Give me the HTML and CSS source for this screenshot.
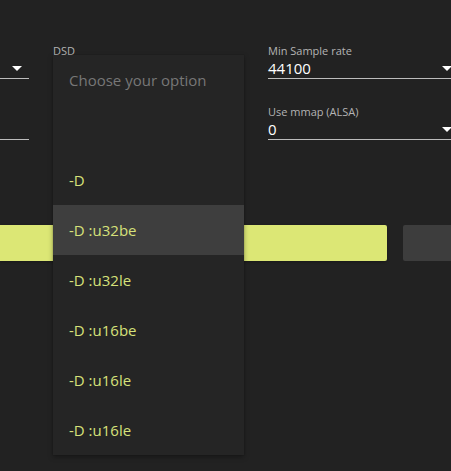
FILE: index.html
```html
<!DOCTYPE html>
<html lang="en">
<head>
<meta charset="utf-8">
<title>Settings</title>
<link rel="stylesheet" href="styles.css">
</head>
<body>
<div class="page">
  <div class="fields">
    <div class="field">
      <div class="label"></div>
      <div class="select"><span class="value"></span><span class="caret"></span></div>
    </div>
    <div class="field">
      <div class="label">DSD</div>
      <div class="select"><span class="value"></span><span class="caret"></span></div>
    </div>
    <div class="field">
      <div class="label">Min Sample rate</div>
      <div class="select"><span class="value">44100</span><span class="caret"></span></div>
    </div>
    <div class="field">
      <div class="label"></div>
      <div class="select plain"><span class="value"></span></div>
    </div>
    <div class="field">
      <div class="label"></div>
      <div class="select"><span class="value"></span><span class="caret"></span></div>
    </div>
    <div class="field">
      <div class="label">Use mmap (ALSA)</div>
      <div class="select"><span class="value">0</span><span class="caret"></span></div>
    </div>
  </div>
  <div class="buttons">
    <div class="btn btn-primary"></div>
    <div class="btn btn-secondary"></div>
  </div>
</div>
<ul class="dropdown">
  <li class="option placeholder">Choose your option</li>
  <li class="option"></li>
  <li class="option">-D</li>
  <li class="option active">-D :u32be</li>
  <li class="option">-D :u32le</li>
  <li class="option">-D :u16be</li>
  <li class="option">-D :u16le</li>
  <li class="option">-D :u16le</li>
</ul>
</body>
</html>
```
FILE: styles.css
```css
html, body {
  margin: 0;
  padding: 0;
  background: #222222;
  width: 451px;
  height: 471px;
  overflow: hidden;
  font-family: "Open Sans", "Noto Sans", sans-serif;
}
body {
  position: relative;
}
.page {
  padding-top: 44px;
}
.fields {
  display: grid;
  grid-template-columns: repeat(3, 191px);
  column-gap: 24px;
  row-gap: 26px;
  margin-left: -162px;
}
.field {
  display: flex;
  flex-direction: column;
}
.label {
  font-size: 11px;
  line-height: 14px;
  height: 14px;
  color: #b4b4b4;
  white-space: nowrap;
}
.select {
  display: flex;
  align-items: center;
  justify-content: space-between;
  height: 20px;
  border-bottom: 1px solid #bdbdbd;
}
.value {
  font-size: 15px;
  line-height: 20px;
  color: #ffffff;
}
.caret {
  width: 0;
  height: 0;
  border-left: 5px solid transparent;
  border-right: 5px solid transparent;
  border-top: 5px solid #ffffff;
  margin-right: 7px;
  margin-top: 1px;
}
.buttons {
  display: flex;
  gap: 16px;
  margin-top: 85px;
}
.btn {
  height: 36px;
  border-radius: 2px;
  flex: none;
}
.btn-primary {
  width: 387px;
  background: #dce775;
  box-shadow: 0 1px 3px rgba(0, 0, 0, 0.3);
  border-radius: 0 2px 2px 0;
}
.btn-secondary {
  width: 120px;
  background: #3d3d3d;
}
.dropdown {
  position: absolute;
  left: 53px;
  top: 55px;
  width: 191px;
  margin: 0;
  padding: 0;
  list-style: none;
  background: #252525;
  box-shadow: 0 2px 5px rgba(0, 0, 0, 0.35), 0 0 1px rgba(0, 0, 0, 0.3);
}
.option {
  height: 50px;
  line-height: 50px;
  padding-left: 16px;
  font-size: 15px;
  color: #d6e17a;
  white-space: nowrap;
}
.option.placeholder {
  color: #777777;
}
.option.active {
  background: #3e3e3e;
}
```
